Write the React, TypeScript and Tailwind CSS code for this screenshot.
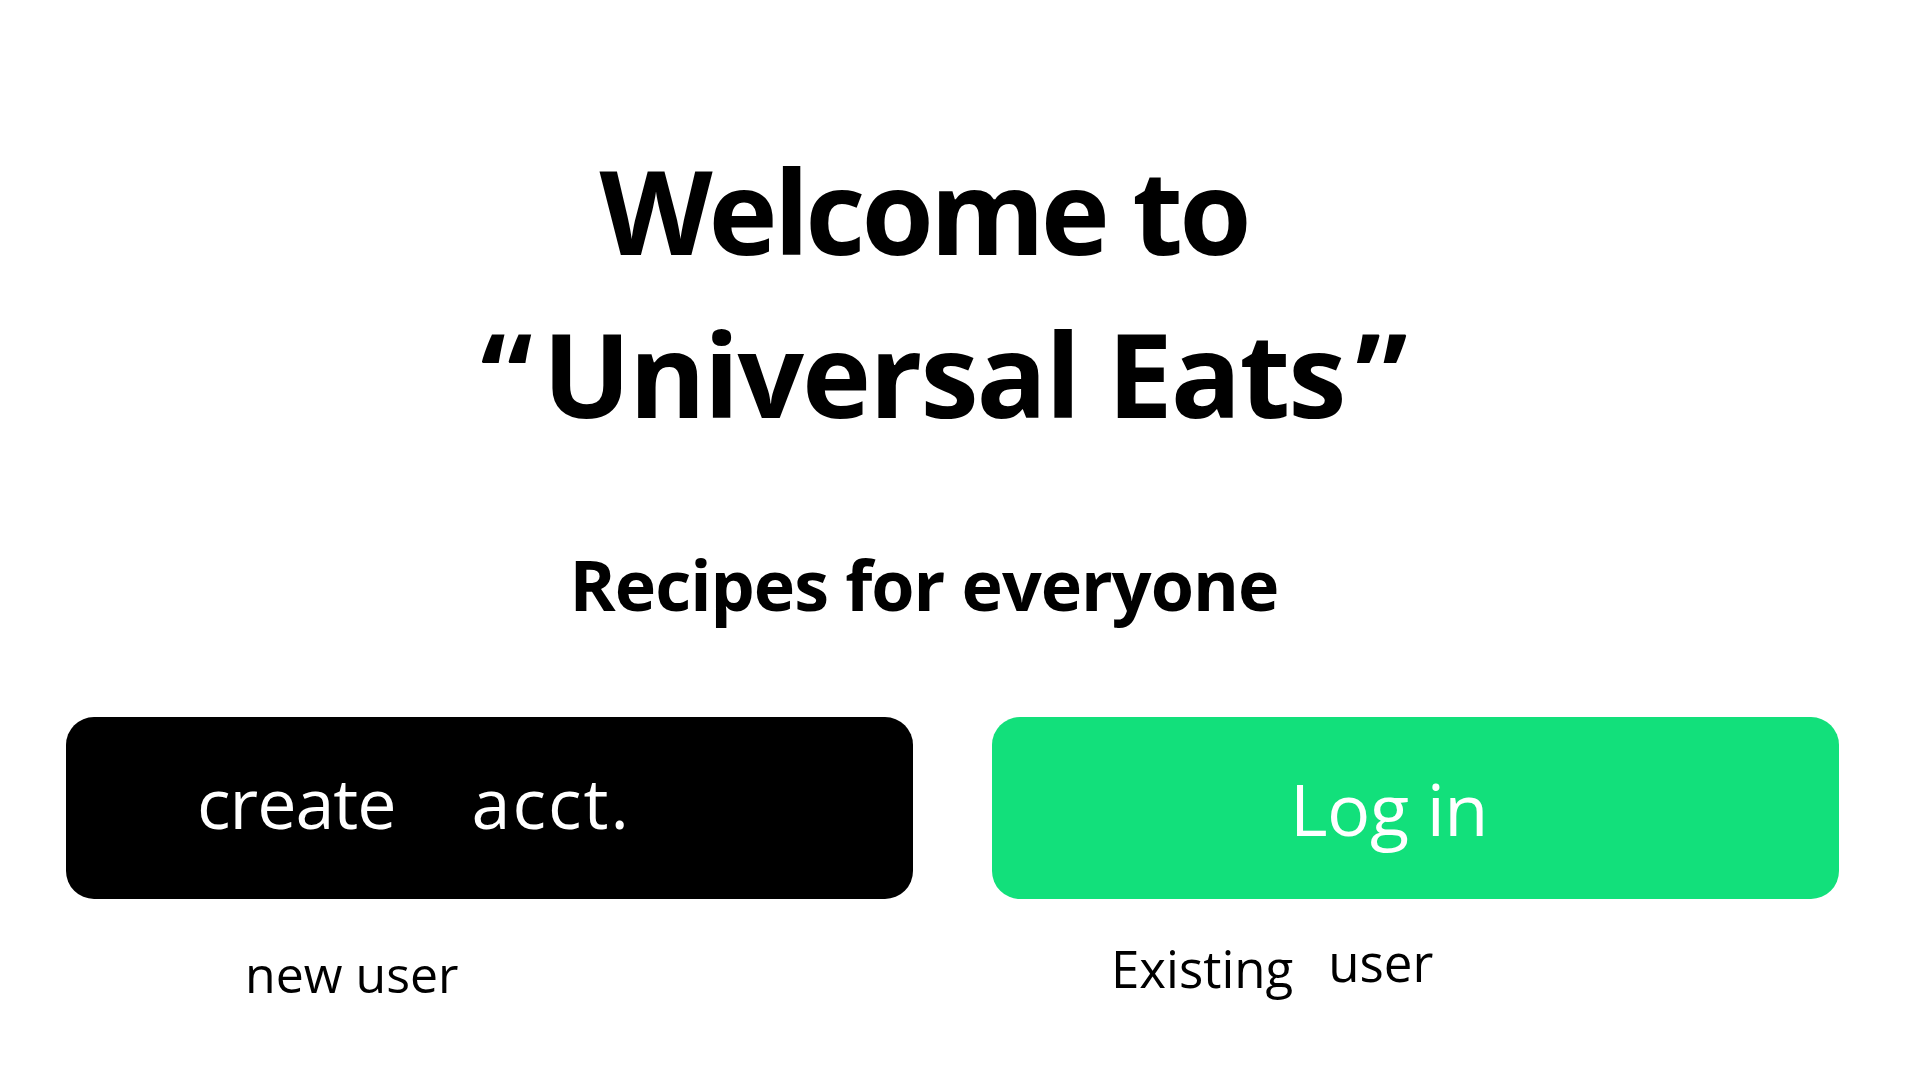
export default function App() {
  return (
    <div
      className="w-full min-h-screen bg-white text-black flex flex-col overflow-hidden"
      style={{ fontFamily: '"Open Sans", "Noto Sans", sans-serif' }}
    >
      {/* title */}
      <h1 className="mt-[128px] font-bold text-[117px] leading-[163px]">
        <div className="text-center pr-[73px] tracking-[-4px]">Welcome to</div>
        <div className="text-center pr-[34px] tracking-[-2px]">
          <span className="mr-[12px]">“</span>Universal Eats<span className="ml-[11px]">”</span>
        </div>
      </h1>

      <p className="mt-[95px] text-center pr-[72px] font-bold text-[70px] leading-none tracking-[-1px]">
        Recipes for everyone
      </p>

      {/* actions */}
      <div className="mt-[98px] flex pl-[66px] gap-[79px]">
        <div className="w-[847px] flex flex-col">
          <button className="h-[182px] rounded-[28px] bg-black text-white flex items-start pt-[50px] pl-[131px] text-[70px] leading-none tracking-[-1px]">
            <span>create</span>
            <span className="ml-[76px] tracking-[2px]">acct.</span>
          </button>
          <span className="mt-[50px] pl-[179px] text-[50px] leading-none">new user</span>
        </div>

        <div className="w-[847px] flex flex-col">
          <button className="h-[182px] rounded-[28px] bg-[#12e07b] text-white flex items-start pt-[55px] pl-[298px] text-[72px] leading-none tracking-[-0.5px]">
            Log in
          </button>
          <div className="mt-[44px] pl-[119px] flex items-baseline text-[51px] leading-none">
            <span>Existing</span>
            <span className="ml-[35px] -translate-y-[6px]">user</span>
          </div>
        </div>
      </div>
    </div>
  );
}
